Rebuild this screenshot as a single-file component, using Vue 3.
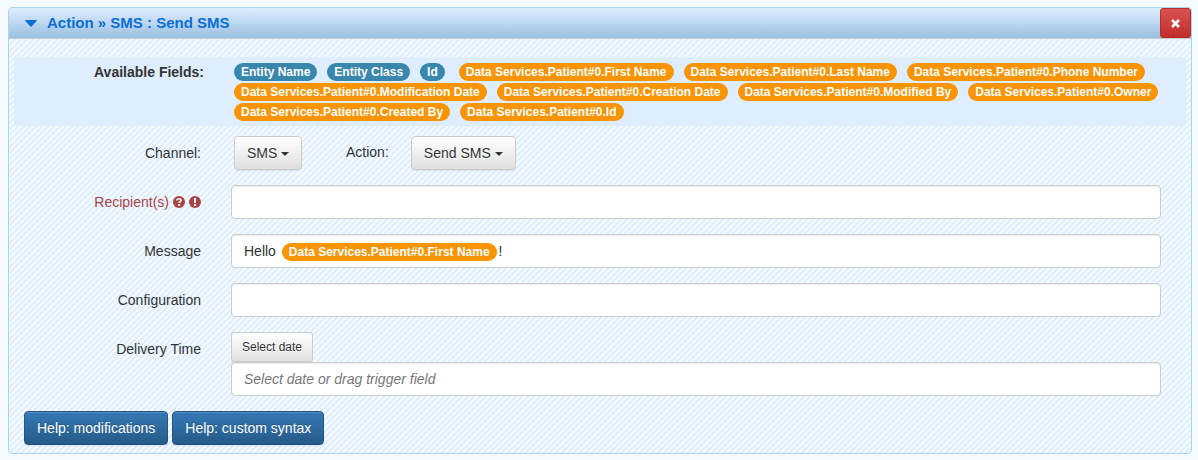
<script setup>
import { ref } from 'vue'

const triggerTags = ['Entity Name', 'Entity Class', 'Id']
const patientTags = [
  'First Name', 'Last Name', 'Phone Number', 'Modification Date', 'Creation Date',
  'Modified By', 'Owner', 'Created By', 'Id',
].map((f) => 'Data Services.Patient#0.' + f)

const channel = ref('SMS')
const action = ref('Send SMS')
const recipients = ref('')
const configuration = ref('')
const delivery = ref('')
</script>

<template>
  <section class="panel">
    <header class="head">
      <svg class="toggle" width="12" height="7" viewBox="0 0 12 7"><path d="M0.6 0H11.4Q12.2 .3 11.6 1L6.6 6.4Q6 7 5.4 6.4L.4 1Q-.2 .3 .6 0Z" fill="#0a6fd6" /></svg>
      <h4>Action » SMS : Send SMS</h4>
      <button class="close" type="button" aria-label="Remove action">
        <svg width="9" height="9" viewBox="0 0 9 9"><path d="M2 2L7 7M7 2L2 7" stroke="#fff" stroke-width="2.7" stroke-linecap="square" /></svg>
      </button>
    </header>

    <form class="body" @submit.prevent>
      <div class="available">
        <strong class="available-label">Available Fields:</strong>
        <div class="tags">
          <span v-for="(t, i) in triggerTags" :key="t" class="tag info" :class="{ last: i === triggerTags.length - 1 }">{{ t }}</span>
          <span v-for="t in patientTags" :key="t" class="tag">{{ t }}</span>
        </div>
      </div>

      <div class="row selects">
        <label class="label" for="channel">Channel:</label>
        <span class="drop">
          <select id="channel" v-model="channel" class="btn"><option>SMS</option></select>
          <svg class="caret" width="8" height="4" viewBox="0 0 8 4"><path d="M0 0H8L4 4Z" fill="#333" /></svg>
        </span>
        <label class="action-label" for="action">Action:</label>
        <span class="drop wide">
          <select id="action" v-model="action" class="btn"><option>Send SMS</option></select>
          <svg class="caret" width="8" height="4" viewBox="0 0 8 4"><path d="M0 0H8L4 4Z" fill="#333" /></svg>
        </span>
      </div>

      <div class="row">
        <label class="label required" for="recipients">
          <span>Recipient(s)</span>
          <svg width="12" height="12" viewBox="0 0 12 12"><circle cx="6" cy="6" r="6" fill="#a94442" /><path d="M4 4.5C4 2.2 8 2.2 8 4.4C8 5.7 6.1 5.6 6.1 7.1" fill="none" stroke="#f4faff" stroke-width="1.7" /><path d="M5.1 8h2v1.8h-2z" fill="#f4faff" /></svg>
          <svg width="12" height="12" viewBox="0 0 12 12"><circle cx="6" cy="6" r="6" fill="#a94442" /><path d="M4.9 2h2.2L6.9 7H5.1zM5 8h2v2H5z" fill="#f4faff" /></svg>
        </label>
        <input id="recipients" v-model="recipients" class="field" type="text">
      </div>

      <div class="row">
        <span id="message-label" class="label">Message</span>
        <div class="field message" role="textbox" contenteditable="true" spellcheck="false" aria-labelledby="message-label">Hello <span class="tag" contenteditable="false">Data Services.Patient#0.First Name</span>!</div>
      </div>

      <div class="row">
        <label class="label" for="configuration">Configuration</label>
        <input id="configuration" v-model="configuration" class="field" type="text">
      </div>

      <div class="row">
        <label class="label" for="delivery">Delivery Time</label>
        <div class="stack">
          <button class="btn small" type="button">Select date</button>
          <input id="delivery" v-model="delivery" class="field" type="text" placeholder="Select date or drag trigger field">
        </div>
      </div>

      <div class="help">
        <button class="primary" type="button">Help: modifications</button>
        <button class="primary" type="button">Help: custom syntax</button>
      </div>
    </form>
  </section>
</template>

<style>
body {
  background: #f5fbff;
}
</style>

<style scoped>
.panel, .panel * {
  box-sizing: border-box;
}
.panel {
  margin: 7px 6px 0 8px;
  border: 1px solid #aad4f5;
  border-radius: 4px;
  color: #333;
  font: 14px/20px "Liberation Sans", Arial, sans-serif;
  background: linear-gradient(135deg, #deeeff 20%, #f5fbff 30% 45%, #deeeff 55% 70%, #f5fbff 80% 95%, #deeeff) 0 0 / 6px 6px;
}
.head {
  display: flex;
  align-items: center;
  height: 31px;
  padding-left: 16px;
  border-bottom: 1px solid #c5cbd2;
  border-radius: 3px 3px 0 0;
  background: linear-gradient(#deeeff, #9abfe0);
}
h4 {
  flex: 1;
  margin: 0 0 0 10px;
  color: #0a6fd6;
  font-size: 15px;
  line-height: 20px;
}
.close {
  display: flex;
  align-items: center;
  justify-content: center;
  width: 31px;
  height: 30px;
  padding: 0;
  border: 1px solid #b92c28;
  border-radius: 3px;
  background: linear-gradient(#d9534f, #c12e2a);
}
.body {
  padding: 18px 5px 8px;
}
.available {
  display: flex;
  margin-bottom: 10px;
  padding: 5px 20px 2px 0;
  border-radius: 4px;
  background: #deeeff;
}
.available-label {
  flex: none;
  width: 190px;
  margin-right: 30px;
  text-align: right;
}
.tags {
  display: flex;
  flex-wrap: wrap;
  gap: 2px 10px;
  padding: 1px 0 3px;
}
.tag {
  padding: 2px 7px;
  border-radius: 9px;
  color: #fff;
  background: #f89406;
  font-size: 12px;
  font-weight: bold;
  line-height: 14px;
  white-space: nowrap;
}
.info {
  background: #3a87ad;
}
.last {
  margin-right: 4px;
}
.row {
  display: flex;
  align-items: flex-start;
  margin-bottom: 15px;
  padding-right: 25px;
}
.label {
  flex: none;
  width: 187px;
  margin-right: 30px;
  padding-top: 7px;
  text-align: right;
}
.required {
  display: flex;
  align-items: center;
  justify-content: flex-end;
  gap: 4px;
  color: #a94442;
}
.field {
  flex: 1;
  display: block;
  width: 100%;
  min-width: 0;
  height: 34px;
  padding: 6px 12px;
  border: 1px solid #ccc;
  border-radius: 4px;
  color: #333;
  background: #fff;
  box-shadow: inset 0 1px 1px rgba(0, 0, 0, 0.075);
  font: inherit;
}
.field::placeholder {
  color: #777;
  font-style: italic;
  opacity: 1;
}
.message .tag {
  margin: 0 2px;
}
.selects .label {
  margin-right: 33px;
}
.drop {
  position: relative;
  width: 68px;
}
.wide {
  width: 105px;
}
.action-label {
  margin: 0 22px 0 44px;
  padding-top: 6px;
}
.btn {
  display: block;
  height: 34px;
  padding: 6px 12px;
  border: 1px solid #ccc;
  border-radius: 4px;
  color: #333;
  background: linear-gradient(#fff, #e0e0e0);
  box-shadow: inset 0 1px 0 rgba(255, 255, 255, 0.15), 0 1px 1px rgba(0, 0, 0, 0.075);
  font: inherit;
  text-shadow: 0 1px 0 #fff;
}
select.btn {
  appearance: none;
  width: 100%;
}
.caret {
  position: absolute;
  top: 16px;
  right: 13px;
  pointer-events: none;
}
.stack {
  flex: 1;
}
.small {
  height: 30px;
  padding: 5px 10px;
  border-radius: 3px;
  font-size: 12px;
  line-height: 18px;
}
.help {
  display: flex;
  gap: 4px;
  padding-left: 10px;
}
.primary {
  height: 34px;
  padding: 6px 12px;
  border: 1px solid #245580;
  border-radius: 4px;
  color: #fff;
  background: linear-gradient(#337ab7, #265a88);
  box-shadow: inset 0 1px 0 rgba(255, 255, 255, 0.15), 0 1px 1px rgba(0, 0, 0, 0.075);
  font: inherit;
  text-shadow: 0 -1px 0 rgba(0, 0, 0, 0.2);
}
</style>
